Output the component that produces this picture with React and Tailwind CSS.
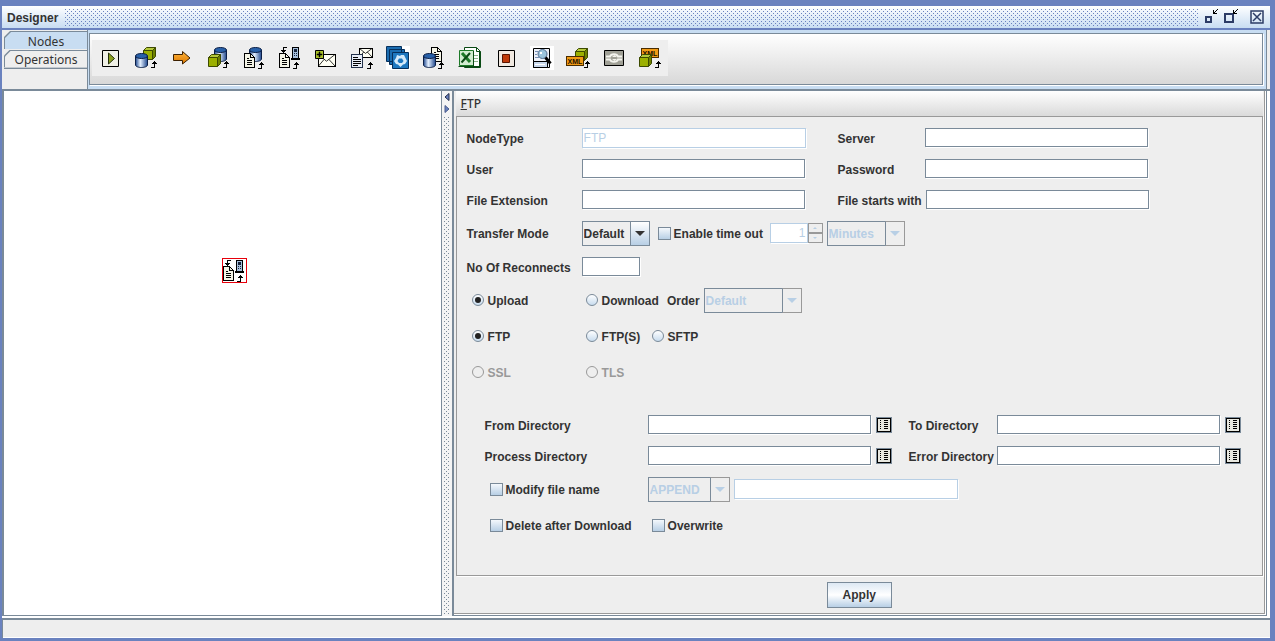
import React, { useState } from "react";

const Label = ({ htmlFor, className = "", children }) => (
  <label htmlFor={htmlFor} className={`shrink-0 whitespace-nowrap pt-0.5 ${className}`}>
    {children}
  </label>
);

const TextField = ({ id, size = "h-[19px] w-[223px]", disabled, value, type = "text", ...rest }) => (
  <input
    id={id}
    type={type}
    defaultValue={value}
    disabled={disabled}
    className={`shrink-0 border border-[#7a8a99] bg-white px-px font-normal shadow-[1px_1px_0_#fff] outline-none disabled:border-[#b8cfe5] disabled:text-[#b8cfe5] ${size}`}
    {...rest}
  />
);

const Combo = ({ id, width, options, disabled, label }) => (
  <div className={`relative h-[25px] shrink-0 ${width}`}>
    <select
      id={id}
      aria-label={label}
      disabled={disabled}
      className="h-full w-full appearance-none border border-[#7a8a99] bg-[#eee] pt-0.5 pl-px font-bold text-[#333] outline-none disabled:text-[#b8cfe5] disabled:opacity-100"
    >
      {options.map((o) => (
        <option key={o}>{o}</option>
      ))}
    </select>
    <span
      className={`pointer-events-none absolute inset-y-0 right-0 flex w-5 items-center justify-center border ${
        disabled
          ? "border-[#999] border-l-[#7a8a99] bg-[#eee] text-[#b8cfe5]"
          : "border-[#7a8a99] bg-linear-to-b from-white to-[#b8cfe5] text-[#333]"
      }`}
    >
      <svg width="10" height="5" viewBox="0 0 10 5" fill="currentColor">
        <path d="M0 0h10L5 5z" />
      </svg>
    </span>
  </div>
);

const CheckBox = ({ id, children }) => (
  <div className="flex shrink-0 items-center gap-[3px]">
    <input
      id={id}
      type="checkbox"
      className="h-[13px] w-[13px] appearance-none border border-[#7a8a99] bg-linear-to-b from-[#f4f8fc] to-[#b8cfe5] checked:bg-[#7a8a99]"
    />
    <Label htmlFor={id}>{children}</Label>
  </div>
);

const Radio = ({ id, name, checked, onChange, disabled, children }) => (
  <div className="flex shrink-0 items-center gap-1">
    <span className="grid h-3 w-3 place-items-center">
      <input
        id={id}
        type="radio"
        name={name}
        checked={checked}
        onChange={onChange}
        disabled={disabled}
        className="col-start-1 row-start-1 h-3 w-3 appearance-none rounded-full border border-[#7a8a99] bg-linear-to-b from-white to-[#c8dcee] disabled:border-[#999] disabled:bg-none"
      />
      {checked && (
        <span className="pointer-events-none col-start-1 row-start-1 h-1.5 w-1.5 rounded-full bg-[#222]" />
      )}
    </span>
    <Label htmlFor={id} className={disabled ? "text-[#999]" : ""}>
      {children}
    </Label>
  </div>
);

const BrowseButton = ({ label }) => (
  <button type="button" aria-label={label} className="ml-[5px] h-4 w-4 shrink-0">
    <svg width="16" height="16" viewBox="0 0 16 16" shapeRendering="crispEdges">
      <path fill="#7a8a99" d="M0 0h16v16H0z" />
      <path fill="#000" d="M1 1h14v14H1z" />
      <path fill="#e8e8e0" d="M2 2h12v12H2z" />
      <path
        fill="#000"
        d="M4 3h1v1H4zM4 5h1v1H4zM4 7h1v1H4zM4 9h1v1H4zM4 11h1v1H4zM8 3h4v1H8zM8 5h4v1H8zM8 7h4v1H8zM8 9h4v1H8zM8 11h4v1H8z"
      />
    </svg>
  </button>
);

/* ---------- icon parts ---------- */

const Cube = ({ x, y }) => (
  <g transform={`translate(${x} ${y})`} stroke="#3d4a00">
    <path fill="#b4c83c" d="M.5 3.5l3-3h9l-3 3z" />
    <path fill="#6e8200" d="M9.5 3.5l3-3v9l-3 3z" />
    <path fill="#9bb000" d="M.5 3.5h9v9h-9z" />
  </g>
);

const Cylinder = ({ x, y }) => (
  <g transform={`translate(${x} ${y})`}>
    <path
      fill="url(#cyl)"
      stroke="#0a1e46"
      d="M.5 3v9c0 1.500 3 2.500 6 2.500s6-1 6-2.500V3"
    />
    <ellipse cx="6.500" cy="3" rx="6" ry="2.500" fill="#2860a8" stroke="#0a1e46" />
  </g>
);

const Doc = ({ x, y }) => (
  <g transform={`translate(${x} ${y})`} shapeRendering="crispEdges">
    <path fill="#f4f4e6" stroke="#000" d="M.5.5h6l4 4v10H.5z" />
    <path fill="none" stroke="#000" d="M6.500.5v4h4M3 5.500h2M3 7.500h5M3 9.500h5M3 11.500h5" />
  </g>
);

const Up = ({ x, y }) => (
  <path
    transform={`translate(${x} ${y})`}
    shapeRendering="crispEdges"
    d="M3 0h1v1h1v1h1v1H4v4H0V6h3V3H1V2h1V1h1z"
  />
);

const Down = ({ x, y }) => (
  <path
    transform={`translate(${x} ${y})`}
    shapeRendering="crispEdges"
    d="M2 0h4v1H3v2h2v1H4v1H3v1H2V5H1V4H0V3h2z"
  />
);

const Phone = ({ x, y }) => (
  <g transform={`translate(${x} ${y})`} shapeRendering="crispEdges">
    <path d="M1 0h7v11h1v2H0v-2h1z" />
    <path fill="#a8c0dc" d="M2 1h5v10H2z" />
    <path fill="#16243c" d="M3 2h3v3H3zM3 6h1v1H3zM5 6h1v1H5zM3 8h1v1H3zM5 8h1v1H5z" />
  </g>
);

const Envelope = ({ x, y, w, h }) => (
  <g transform={`translate(${x} ${y})`} fill="#fffff4" stroke="#000">
    <rect x=".5" y=".5" width={w} height={h} shapeRendering="crispEdges" />
    <path
      fill="none"
      strokeWidth=".8"
      d={`M.5.5L${w / 2} ${h * 0.6}L${w} .5M.5 ${h}L${w * 0.36} ${h * 0.45}M${w} ${h}L${w * 0.64} ${h * 0.45}`}
    />
  </g>
);

const XmlTag = ({ x, y }) => (
  <g transform={`translate(${x} ${y})`}>
    <rect x=".5" y=".5" width="17" height="9" fill="#f09a14" stroke="#4a2c00" />
    <text
      x="9"
      y="8"
      textAnchor="middle"
      fontSize="7"
      fontWeight="bold"
      fontFamily="Liberation Sans, sans-serif"
      fill="#201000"
    >
      XML
    </text>
  </g>
);

const FtpGlyph = () => (
  <>
    <Down x={9} y={7} />
    <Phone x={19} y={7} />
    <Doc x={7} y={13} />
    <Up x={21} y={22} />
  </>
);

const TOOLS = [
  {
    name: "Start",
    icon: (
      <>
        <path fill="#f0f0e6" stroke="#000" d="M10.500 10.500h16v16h-16z" />
        <path fill="#8aa01e" stroke="#26300a" d="M16.500 13l6 5.500-6 5.500z" />
      </>
    ),
  },
  { name: "Object to database", icon: <><Cube x={15} y={7} /><Cylinder x={7} y={13} /><Up x={23} y={21} /></> },
  {
    name: "Connector",
    icon: <path fill="url(#orange)" stroke="#3c2000" d="M9.500 14.500h9v-3l7.500 6.500-7.500 6v-3.500h-9z" />,
  },
  { name: "Database to object", icon: <><Cylinder x={14} y={7} /><Cube x={8} y={14} /><Up x={23} y={21} /></> },
  { name: "Database to file", icon: <><Cylinder x={13} y={7} /><Doc x={8} y={13} /><Up x={22} y={22} /></> },
  { name: "FTP", icon: <FtpGlyph /> },
  {
    name: "New mail",
    icon: (
      <>
        <Envelope x={10} y={14} w={17} h={12} />
        <path fill="#a8be28" stroke="#000" d="M7.500 10.500h8v8h-8z" />
        <path d="M11 12h1v2h2v1h-2v2h-1v-2H9v-1h2z" stroke="#000" strokeWidth=".5" />
      </>
    ),
  },
  {
    name: "Mail to file",
    icon: (
      <>
        <Envelope x={15} y={8} w={13} h={9} />
        <g shapeRendering="crispEdges">
          <path fill="#e8eef8" stroke="#22304a" d="M7.500 14.500h11v13h-11z" />
          <path stroke="#000" d="M9 17.500h5M9 19.500h8M9 21.500h8M9 23.500h8M9 25.500h5" />
        </g>
        <Up x={23} y={22} />
      </>
    ),
  },
  {
    name: "Batch",
    icon: (
      <>
        <path fill="#fff" d="M6 6h24v24H6z" />
        <path fill="#1a6cb0" stroke="#06305c" d="M6.500 6.500h15v15h-15zM9.500 9.500h15v15h-15z" />
        <path fill="#1e78c0" stroke="#06305c" d="M12.500 12.500h16v16h-16z" />
        <path
          fill="#d4eafa"
          d="M17 15l3 1 1-1 3 0 1.500 3 1.500 3-2 3-2 .5-2.500 2.500-2.500-2.500-2-.5-2-3 2-3z"
        />
        <path fill="#1e78c0" d="M19 18.500h3l1.500 2.500-1.500 2h-3L17.500 21z" />
      </>
    ),
  },
  { name: "File to database", icon: <><Doc x={15} y={7} /><Cylinder x={7} y={13} /><Up x={22} y={22} /></> },
  {
    name: "Excel",
    icon: (
      <>
        <path fill="#fff" stroke="#0a4a14" d="M12.500 7.500h12l4 4v16h-16z" />
        <path fill="none" stroke="#0a4a14" d="M24.500 7.500v4h4M20 26.500h8M27.500 12v15" />
        <path fill="none" stroke="#8cb48c" d="M21 15.500h5M21 18.500h5M21 21.500h5" />
        <path fill="#d2ecd0" stroke="#1e7a28" d="M7.500 10.500h14v15h-14z" />
        <path fill="none" stroke="#0a4a14" d="M6.500 26.500h15M21.500 11v15" />
        <path stroke="#1e7a28" strokeWidth="3" d="M10 13l8 9" />
        <path stroke="#0a4a14" strokeWidth="2" d="M18 13l-8.500 9.500" />
      </>
    ),
  },
  {
    name: "Stop",
    icon: (
      <>
        <path fill="#f0e8e0" stroke="#000" d="M10.500 10.500h16v16h-16z" />
        <path fill="#c03a0a" stroke="#5a1400" d="M14.500 14.500h7v8h-7z" />
      </>
    ),
  },
  {
    name: "Search file",
    icon: (
      <>
        <path fill="#fff" d="M6 6h24v24H6z" />
        <path fill="#eef2fa" stroke="#000" d="M9.500 8.500h16v19h-16z" />
        <path stroke="#7890b4" d="M11 11.500h3M11 14.500h2M11 17.500h4" />
        <path fill="#c8d8ec" stroke="#000" d="M9.500 21.500h14v6h-14z" />
        <path stroke="#fff" d="M11 24.500h10" />
        <circle cx="18.500" cy="14" r="4.500" fill="#9cc4dc" stroke="#506a8c" />
        <path stroke="#000" strokeWidth="3" d="M21.500 17.500l5 6" />
        <path fill="#fff" d="M16 12h2v2h-2z" />
      </>
    ),
  },
  { name: "Object to XML", icon: <><Cube x={15} y={8} /><XmlTag x={6} y={16} /><Up x={24} y={21} /></> },
  {
    name: "Loop",
    icon: (
      <>
        <path fill="#a0a096" stroke="#000" d="M8.500 10.500h19v15h-19z" />
        <path
          fill="none"
          stroke="#f4f4ee"
          strokeWidth="2"
          d="M10 16.500h4c1-3 7-3 8 0h4M10 19.500h4c1 3 7 3 8 0h4"
        />
        <path fill="#f4f4ee" d="M16 17h5l-2.500-2zM16 19h5l-2.500 2z" />
      </>
    ),
  },
  { name: "XML to object", icon: <><XmlTag x={9} y={8} /><Cube x={7} y={14} /><Up x={23} y={21} /></> },
];

const TitleBar = () => (
  <header className="flex h-6 items-center gap-[7px] border-b-2 border-[#6a82bf] bg-linear-to-b from-white to-[#c8ddf2] pr-1.5 pl-[5px]">
    <h1 className="pt-0.5 font-bold">Designer</h1>
    <div className="h-[17px] grow bg-[conic-gradient(at_1px_1px,transparent_75%,#6a82bf_0),conic-gradient(at_1px_1px,transparent_75%,#6a82bf_0)] bg-[length:4px_4px] bg-[position:0_0,2px_2px]" />
    <div className="flex items-center gap-[5px]">
      <button type="button" aria-label="Minimize">
        <svg width="14" height="16" viewBox="0 0 14 16" shapeRendering="crispEdges">
          <path fill="none" stroke="#2c3c66" strokeWidth="2" d="M1 8h5v5H1z" />
          <path d="M8 1h1v3h3v1H8zM9 3h1v1H9zM10 2h1v1h-1zM11 1h1v1h-1zM12 0h1v1h-1z" />
        </svg>
      </button>
      <button type="button" aria-label="Restore">
        <svg width="14" height="16" viewBox="0 0 14 16" shapeRendering="crispEdges">
          <path fill="none" stroke="#2c3c66" strokeWidth="2" d="M1 5h8v8H1z" />
          <path d="M9 1h1v3h3v1H9zM10 3h1v1h-1zM11 2h1v1h-1zM12 1h1v1h-1zM13 0h1v1h-1z" />
        </svg>
      </button>
      <button type="button" aria-label="Close" className="ml-[7px]">
        <svg width="14" height="14" viewBox="0 0 14 14">
          <path fill="none" stroke="#2c3c66" strokeWidth="1.500" d="M1 1h12v12H1z" />
          <path stroke="#2c3c66" strokeWidth="1.500" d="M3 3l8 8M11 3l-8 8" />
        </svg>
      </button>
    </div>
  </header>
);

const PaletteTab = ({ active, onClick, children }) => (
  <button
    type="button"
    role="tab"
    aria-selected={active}
    onClick={onClick}
    className="h-[18px] w-full bg-[#7a8a99] p-px pr-0 pb-0 font-['Noto_Sans','Open_Sans',sans-serif] font-normal [clip-path:polygon(6px_0,100%_0,100%_100%,0_100%,0_6px)]"
  >
    <span
      className={`flex h-full items-center justify-center pt-0.5 [clip-path:polygon(6px_0,100%_0,100%_100%,0_100%,0_6px)] ${
        active ? "bg-[#c8ddf2]" : "bg-[#eee]"
      }`}
    >
      {children}
    </span>
  </button>
);

const Palette = () => {
  const [tab, setTab] = useState("Nodes");

  return (
    <div className="flex border-b-2 border-[#7a8a99] pr-[3px]">
      <div role="tablist" className="w-[86px] shrink-0 border-r border-[#7a8a99] pt-px pl-0.5">
        {["Nodes", "Operations"].map((t) => (
          <PaletteTab key={t} active={tab === t} onClick={() => setTab(t)}>
            {t}
          </PaletteTab>
        ))}
        <div className="border-t border-[#7a8a99]" />
      </div>
      <div className="min-w-0 grow border-r border-[#7a8a99] bg-[#c8ddf2] pt-[3px] pr-[3px] pb-1 pl-px">
        <div className="h-[52px] border border-[#7a8a99] bg-linear-to-b from-white to-[#d8d8d8] pt-1.5 pl-0.5 shadow-[1px_1px_0_#fff]">
          <div className="flex w-fit bg-[#eee]">
            {TOOLS.map((tool) => (
              <button key={tool.name} type="button" title={tool.name} aria-label={tool.name}>
                <svg width="36" height="36" viewBox="0 0 36 36">
                  {tool.icon}
                </svg>
              </button>
            ))}
          </div>
        </div>
      </div>
    </div>
  );
};

const Splitter = () => (
  <div className="flex w-2.5 shrink-0 flex-col items-center gap-1 bg-[#f4f4f4]">
    <button type="button" aria-label="Collapse left" className="mt-0.5">
      <svg width="8" height="8" viewBox="0 0 8 8" fill="#6a82bf" stroke="#222c4a">
        <path d="M6 .5v7L2 4z" />
      </svg>
    </button>
    <button type="button" aria-label="Collapse right">
      <svg width="8" height="8" viewBox="0 0 8 8" fill="#6a82bf" stroke="#4a5c8c">
        <path d="M2 .5v7L6 4z" />
      </svg>
    </button>
    <div className="mb-px w-[5px] grow bg-[conic-gradient(at_1px_1px,transparent_75%,#7a8a99_0),conic-gradient(at_1px_1px,transparent_75%,#7a8a99_0)] bg-[length:4px_4px] bg-[position:0_0,2px_2px]" />
  </div>
);

const FtpForm = () => {
  const [direction, setDirection] = useState("upload");
  const [protocol, setProtocol] = useState("ftp");

  return (
    <div className="grow border border-[#999] pt-[5px] pb-8 pl-[10px] shadow-[1px_1px_0_#fff]">
      <div className="flex h-[31px] items-center">
        <Label htmlFor="nodeType" className="w-[115px]">NodeType</Label>
        <TextField id="nodeType" size="h-5 w-56" value="FTP" disabled />
        <Label htmlFor="server" className="ml-8 min-w-[87px]">Server</Label>
        <TextField id="server" />
      </div>
      <div className="flex h-[31px] items-center">
        <Label htmlFor="user" className="w-[115px]">User</Label>
        <TextField id="user" />
        <Label htmlFor="password" className="ml-[33px] min-w-[87px]">Password</Label>
        <TextField id="password" type="password" />
      </div>
      <div className="flex h-[31px] items-center">
        <Label htmlFor="fileExt" className="w-[115px]">File Extension</Label>
        <TextField id="fileExt" />
        <Label htmlFor="startsWith" className="ml-[33px] min-w-[87px] pr-1">File starts with</Label>
        <TextField id="startsWith" />
      </div>
      <div className="flex h-9 items-center">
        <Label htmlFor="mode" className="w-[115px]">Transfer Mode</Label>
        <Combo id="mode" width="w-[68px]" options={["Default", "ASCII", "Binary"]} />
        <div className="ml-2 w-28">
          <CheckBox id="timeout">Enable time out</CheckBox>
        </div>
        <div className="flex h-5 w-[53px] shrink-0">
          <TextField
            id="timeoutValue"
            aria-label="Time out"
            size="h-5 w-[38px] text-right"
            value="1"
            disabled
          />
          <div className="flex grow flex-col text-[#b8cfe5]">
            <button type="button" disabled aria-label="Increase" className="flex h-2.5 items-center justify-center border border-[#999]">
              <svg width="4" height="2" viewBox="0 0 4 2" fill="currentColor"><path d="M0 2h4L2 0z" /></svg>
            </button>
            <button type="button" disabled aria-label="Decrease" className="flex h-2.5 items-center justify-center border border-[#999]">
              <svg width="4" height="2" viewBox="0 0 4 2" fill="currentColor"><path d="M0 0h4L2 2z" /></svg>
            </button>
          </div>
        </div>
        <div className="ml-1">
          <Combo label="Time unit" width="w-[78px]" options={["Minutes", "Hours"]} disabled />
        </div>
      </div>
      <div className="flex h-[31px] items-center">
        <Label htmlFor="reconnects" className="w-[115px]">No Of Reconnects</Label>
        <TextField id="reconnects" size="h-[19px] w-[58px]" />
      </div>

      <div className="flex h-9 items-center pl-[5px]">
        <div className="w-[114px]">
          <Radio id="upload" name="direction" checked={direction === "upload"} onChange={() => setDirection("upload")}>Upload</Radio>
        </div>
        <Radio id="download" name="direction" checked={direction === "download"} onChange={() => setDirection("download")}>Download</Radio>
        <Label htmlFor="order" className="mr-1 ml-2">Order</Label>
        <Combo id="order" width="w-[98px]" options={["Default"]} disabled />
      </div>
      <div className="flex h-9 items-center pl-[5px]">
        <div className="w-[114px]">
          <Radio id="ftp" name="protocol" checked={protocol === "ftp"} onChange={() => setProtocol("ftp")}>FTP</Radio>
        </div>
        <div className="w-[66px]">
          <Radio id="ftps" name="protocol" checked={protocol === "ftps"} onChange={() => setProtocol("ftps")}>FTP(S)</Radio>
        </div>
        <Radio id="sftp" name="protocol" checked={protocol === "sftp"} onChange={() => setProtocol("sftp")}>SFTP</Radio>
      </div>
      <div className="flex h-9 items-center pl-[5px]">
        <div className="w-[114px]">
          <Radio id="ssl" name="security" disabled>SSL</Radio>
        </div>
        <Radio id="tls" name="security" disabled>TLS</Radio>
      </div>

      <div className="mt-[19px] pl-[18px]">
        <div className="flex h-[31px] items-center">
          <Label htmlFor="fromDir" className="w-[163px]">From Directory</Label>
          <TextField id="fromDir" />
          <BrowseButton label="Browse from directory" />
          <Label htmlFor="toDir" className="ml-[17px] min-w-[88px]">To Directory</Label>
          <TextField id="toDir" />
          <BrowseButton label="Browse to directory" />
        </div>
        <div className="flex h-[31px] items-center">
          <Label htmlFor="processDir" className="w-[163px]">Process Directory</Label>
          <TextField id="processDir" />
          <BrowseButton label="Browse process directory" />
          <Label htmlFor="errorDir" className="ml-[17px] min-w-[88px] pr-[3px]">Error Directory</Label>
          <TextField id="errorDir" />
          <BrowseButton label="Browse error directory" />
        </div>
        <div className="flex h-9 items-center pl-[5px]">
          <div className="w-[158px]">
            <CheckBox id="modify">Modify file name</CheckBox>
          </div>
          <Combo label="Rename mode" width="w-[82px]" options={["APPEND", "PREPEND"]} disabled />
          <div className="ml-1 flex">
            <TextField id="newName" aria-label="New file name" size="h-5 w-56" disabled />
          </div>
        </div>
        <div className="flex h-9 items-center pl-[5px]">
          <div className="w-[162px]">
            <CheckBox id="deleteAfter">Delete after Download</CheckBox>
          </div>
          <CheckBox id="overwrite">Overwrite</CheckBox>
        </div>
      </div>
    </div>
  );
};

const App = () => {
  return (
    <div className="flex min-h-screen flex-col border-t-6 border-r-5 border-b-3 border-l-2 border-[#6a82bf] bg-[#eee] font-['Liberation_Sans',Arial,sans-serif] text-xs font-bold text-[#333]">
      <TitleBar />
      <Palette />

      <main className="flex grow bg-white pr-[3px]">
        <section
          aria-label="Canvas"
          className="relative min-w-0 flex-[439_1_0] border-r border-b border-l-2 border-[#7a8a99] bg-white"
        >
          <button
            type="button"
            aria-label="FTP node"
            className="absolute top-[167px] left-[218px] h-[25px] w-[25px] border border-red-600"
          >
            <svg width="23" height="23" viewBox="7 6 23 23">
              <FtpGlyph />
            </svg>
          </button>
        </section>

        <Splitter />

        <section className="flex min-w-0 flex-[816_1_0] flex-col border-r border-b border-l-2 border-[#7a8a99] bg-white pr-px pb-px">
          <div className="flex grow flex-col border-r border-b border-[#999] bg-[#eee] pr-px pl-0.5">
            <h2 className="flex h-[25px] items-center bg-linear-to-b from-white to-[#dadada] pl-[5px] font-['Noto_Sans','Open_Sans',sans-serif] font-medium">
              <span className="underline">F</span>TP
            </h2>
            <FtpForm />
            <div className="flex justify-center pt-1.5 pb-[5px]">
              <button
                type="button"
                className="h-[26px] w-[65px] border border-[#7a8a99] bg-linear-to-b from-[#dde8f3] via-white to-[#b8cfe5]"
              >
                Apply
              </button>
            </div>
          </div>
        </section>
      </main>

      <div className="bg-white pt-0.5">
        <footer className="h-5 border-t-2 border-l border-[#7a8a99] bg-[#eee] shadow-[inset_0_-1px_0_#fff]" />
      </div>

      {/* shared gradients for the toolbar icons */}
      <svg width="0" height="0" className="absolute" aria-hidden="true">
        <linearGradient id="cyl">
          <stop offset="0" stopColor="#1e468c" />
          <stop offset=".4" stopColor="#e4f0ff" />
          <stop offset="1" stopColor="#1e468c" />
        </linearGradient>
        <linearGradient id="orange" x2="0" y2="1">
          <stop offset="0" stopColor="#ffb43c" />
          <stop offset="1" stopColor="#dc7800" />
        </linearGradient>
      </svg>
    </div>
  );
};

export default App;
